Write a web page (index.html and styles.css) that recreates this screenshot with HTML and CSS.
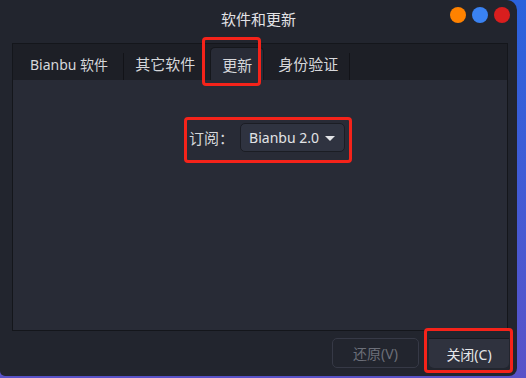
FILE: index.html
```html
<!DOCTYPE html>
<html lang="zh-CN">
<head>
<meta charset="utf-8">
<title>软件和更新</title>
<link rel="stylesheet" href="styles.css">
</head>
<body>
<div class="window">
  <div class="titlebar">
    <div class="spacer"></div>
    <div class="title">软件和更新</div>
    <div class="dots">
      <span class="dot dot-orange"></span>
      <span class="dot dot-blue"></span>
      <span class="dot dot-red"></span>
    </div>
  </div>
  <div class="notebook">
    <div class="tabs">
      <div class="tab tab-first">Bianbu 软件</div>
      <div class="sep"></div>
      <div class="tab">其它软件</div>
      <div class="tab tab-active">更新</div>
      <div class="tab">身份验证</div>
      <div class="sep"></div>
    </div>
    <div class="page">
      <div class="sub-row">
        <span class="sub-label">订阅：</span>
        <div class="combo"><span>Bianbu 2.0</span><span class="caret"></span></div>
      </div>
    </div>
  </div>
  <div class="actions">
    <div class="btn btn-disabled">还原(V)</div>
    <div class="btn btn-close">关闭(C)</div>
  </div>
  <div class="mark mark-tab"></div>
  <div class="mark mark-sub"></div>
  <div class="mark mark-close"></div>
</div>
</body>
</html>
```

FILE: styles.css
```css
html, body {
  margin: 0;
  padding: 0;
}
body {
  width: 526px;
  height: 378px;
  overflow: hidden;
  background: linear-gradient(180deg, #2a62dc 0%, #3f5cd6 45%, #5a52c8 100%);
  font-family: "Noto Sans", "Noto Sans CJK SC", sans-serif;
  font-size: 14px;
  color: #dcdde0;
}
.window {
  position: relative;
  width: 517px;
  height: 376px;
  background: #22252e;
  border-radius: 0 10px 8px 5px;
  display: flex;
  flex-direction: column;
  box-sizing: border-box;
}
.titlebar {
  height: 36px;
  flex: none;
  display: grid;
  grid-template-columns: 1fr auto 1fr;
  align-items: center;
  padding-right: 7px;
  margin-bottom: 7px;
}
.title {
  font-size: 15px;
  color: #e2e3e6;
  padding-left: 7px;
}
.dots {
  justify-self: end;
  align-self: start;
  margin-top: 7px;
  display: flex;
  gap: 6px;
}
.dot {
  width: 16px;
  height: 16px;
  border-radius: 50%;
  display: block;
}
.dot-orange { background: #ff8200; }
.dot-blue { background: #3a82f2; }
.dot-red { background: #d91e1e; }

.notebook {
  margin: 0 9px 0 12px;
  height: 288px;
  flex: none;
  border: 1px solid #14161b;
  display: flex;
  flex-direction: column;
  box-sizing: border-box;
}
.tabs {
  height: 36px;
  flex: none;
  background: #1d1f26;
  display: flex;
  align-items: flex-end;
}
.tab {
  height: 33px;
  padding: 0 11px;
  display: flex;
  align-items: center;
  color: #d6d7da;
  box-sizing: border-box;
  white-space: nowrap;
  font-size: 15px;
}
.tab-first {
  font-size: 14px;
  padding: 0 15px 0 17px;
}
.tab-active {
  background: #282b36;
  border-radius: 5px 5px 0 0;
  margin: 0 3px 0 4px;
  border: 1px solid #15171c;
  border-bottom: none;
  padding: 0 11px;
}
.sep {
  width: 1px;
  height: 27px;
  background: #121318;
}
.page {
  flex: 1;
  background: #282b36;
  display: flex;
  justify-content: center;
  padding-top: 43px;
  padding-left: 14px;
}
.sub-row {
  display: flex;
  align-items: center;
  height: 29px;
  gap: 6px;
}
.sub-label {
  color: #d6d7da;
  font-size: 15px;
}
.combo {
  height: 29px;
  box-sizing: border-box;
  padding: 0 9px 0 8px;
  display: flex;
  align-items: center;
  gap: 6px;
  background: #2f3340;
  border: 1px solid #1b1d24;
  border-radius: 5px;
  color: #e2e3e6;
}
.caret {
  width: 0;
  height: 0;
  border-left: 5px solid transparent;
  border-right: 5px solid transparent;
  border-top: 5px solid #e2e3e6;
  margin-top: 1px;
}
.actions {
  flex: 1;
  display: flex;
  justify-content: flex-end;
  align-items: flex-start;
  gap: 10px;
  padding: 7px 8px 0 0;
}
.btn {
  height: 30px;
  box-sizing: border-box;
  display: flex;
  align-items: center;
  justify-content: center;
  border-radius: 5px;
}
.btn-disabled {
  width: 87px;
  border: 1px solid #363946;
  color: #6c6f79;
}
.btn-close {
  width: 80px;
  background: #2f323e;
  border-top: 1px solid #191b21;
  border-radius: 0 0 5px 5px;
  color: #e6e7ea;
}
.mark {
  position: absolute;
  border: 3px solid #f5231a;
  border-radius: 4px;
  box-sizing: border-box;
}
.mark-tab {
  left: 202px;
  top: 37px;
  width: 59px;
  height: 49px;
}
.mark-sub {
  left: 184px;
  top: 117px;
  width: 168px;
  height: 46px;
}
.mark-close {
  left: 424px;
  top: 328px;
  width: 89px;
  height: 45px;
}
```
